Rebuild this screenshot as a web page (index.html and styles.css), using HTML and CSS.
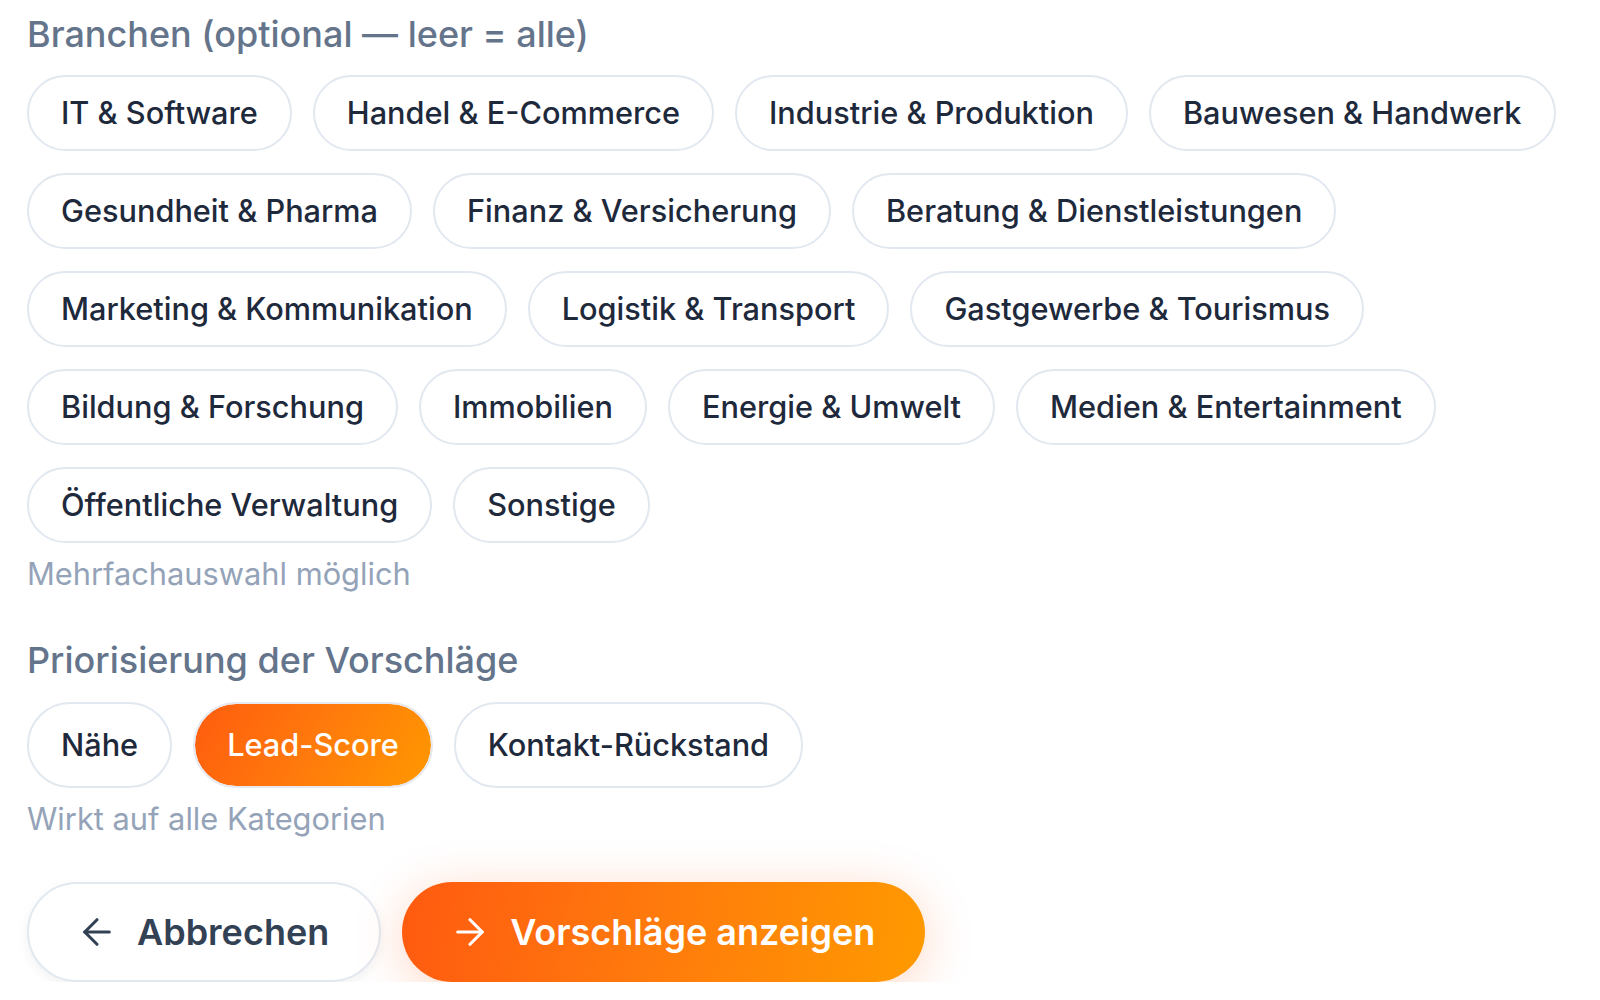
FILE: index.html
```html
<!DOCTYPE html>
<html lang="de">
<head>
<meta charset="utf-8">
<title>Branchen</title>
<link rel="stylesheet" href="styles.css">
</head>
<body>
<main class="panel">
  <section class="group">
    <h2 class="label">Branchen (optional — leer = alle)</h2>
    <div class="chips">
      <button class="chip">IT &amp; Software</button>
      <button class="chip">Handel &amp; E-Commerce</button>
      <button class="chip">Industrie &amp; Produktion</button>
      <button class="chip">Bauwesen &amp; Handwerk</button>
      <button class="chip">Gesundheit &amp; Pharma</button>
      <button class="chip">Finanz &amp; Versicherung</button>
      <button class="chip">Beratung &amp; Dienstleistungen</button>
      <button class="chip">Marketing &amp; Kommunikation</button>
      <button class="chip">Logistik &amp; Transport</button>
      <button class="chip">Gastgewerbe &amp; Tourismus</button>
      <button class="chip">Bildung &amp; Forschung</button>
      <button class="chip">Immobilien</button>
      <button class="chip">Energie &amp; Umwelt</button>
      <button class="chip">Medien &amp; Entertainment</button>
      <button class="chip">Öffentliche Verwaltung</button>
      <button class="chip">Sonstige</button>
    </div>
    <p class="hint hint-multi">Mehrfachauswahl möglich</p>
  </section>

  <section class="group group-prio">
    <h2 class="label">Priorisierung der Vorschläge</h2>
    <div class="chips">
      <button class="chip chip-lg">Nähe</button>
      <button class="chip chip-lg chip-active">Lead-Score</button>
      <button class="chip chip-lg">Kontakt-Rückstand</button>
    </div>
    <p class="hint hint-prio">Wirkt auf alle Kategorien</p>
  </section>

  <div class="actions">
    <button class="btn btn-secondary">
      <svg class="icon" viewBox="0 0 24 24" fill="none" stroke="currentColor" stroke-width="1.8" stroke-linecap="round" stroke-linejoin="round"><path d="M19 12H5"/><path d="M12 19l-7-7 7-7"/></svg>
      <span>Abbrechen</span>
    </button>
    <button class="btn btn-primary">
      <svg class="icon" viewBox="0 0 24 24" fill="none" stroke="currentColor" stroke-width="1.8" stroke-linecap="round" stroke-linejoin="round"><path d="M5 12h14"/><path d="M12 5l7 7-7 7"/></svg>
      <span>Vorschläge anzeigen</span>
    </button>
  </div>
</main>
</body>
</html>
```

FILE: styles.css
```css
* { box-sizing: border-box; }

html, body {
  margin: 0;
  padding: 0;
  background: #ffffff;
}

body {
  font-family: Inter, "Noto Sans", "Liberation Sans", sans-serif;
  color: #1e293b;
}

.panel {
  padding: 14px 20px 0 27px;
  width: 1600px;
}

.label {
  margin: 0;
  font-size: 36px;
  line-height: 40px;
  font-weight: 500;
  color: #64748b;
}

.chips {
  display: flex;
  flex-wrap: wrap;
  gap: 22px 21px;
  margin-top: 21px;
}

.chip {
  font-family: inherit;
  font-size: 30.7px;
  line-height: 40px;
  font-weight: 500;
  color: #1e293b;
  background: #ffffff;
  border: 2px solid #e2e8f0;
  border-radius: 999px;
  padding: 16px 32px;
  cursor: pointer;
}

.chip-lg {
  padding: 21px 32px;
}

.chip-active {
  color: #ffffff;
  background: linear-gradient(120deg, #ff5c0e 0%, #ff7a0c 50%, #ff9800 100%);
  background-clip: padding-box;
  border-color: #e6e9ef;
}

.hint {
  margin: 0;
  font-size: 30.8px;
  line-height: 36px;
  font-weight: 400;
  color: #94a3b8;
}

.hint-multi { margin-top: 13px; }

.group-prio { margin-top: 48px; }

.group-prio .chips { margin-top: 22px; }

.hint-prio { margin-top: 13px; }

.actions {
  display: flex;
  gap: 21px;
  margin-top: 45px;
}

.btn {
  display: flex;
  align-items: center;
  gap: 19px;
  height: 100px;
  border-radius: 999px;
  font-family: inherit;
  font-size: 36px;
  font-weight: 600;
  cursor: pointer;
}

.btn .icon {
  width: 42px;
  height: 42px;
  flex: none;
}

.btn-secondary {
  padding: 0 50px 0 47px;
  background: #ffffff;
  color: #334155;
  border: 2px solid #e2e8f0;
  box-shadow: 0 4px 12px rgba(15, 23, 42, 0.06);
}

.btn-primary {
  padding: 0 50px 0 47px;
  color: #ffffff;
  border: none;
  background: linear-gradient(100deg, #ff5a10 0%, #ff780d 45%, #ff9a00 100%);
  box-shadow: 0 8px 48px rgba(255, 96, 24, 0.25);
}
```
